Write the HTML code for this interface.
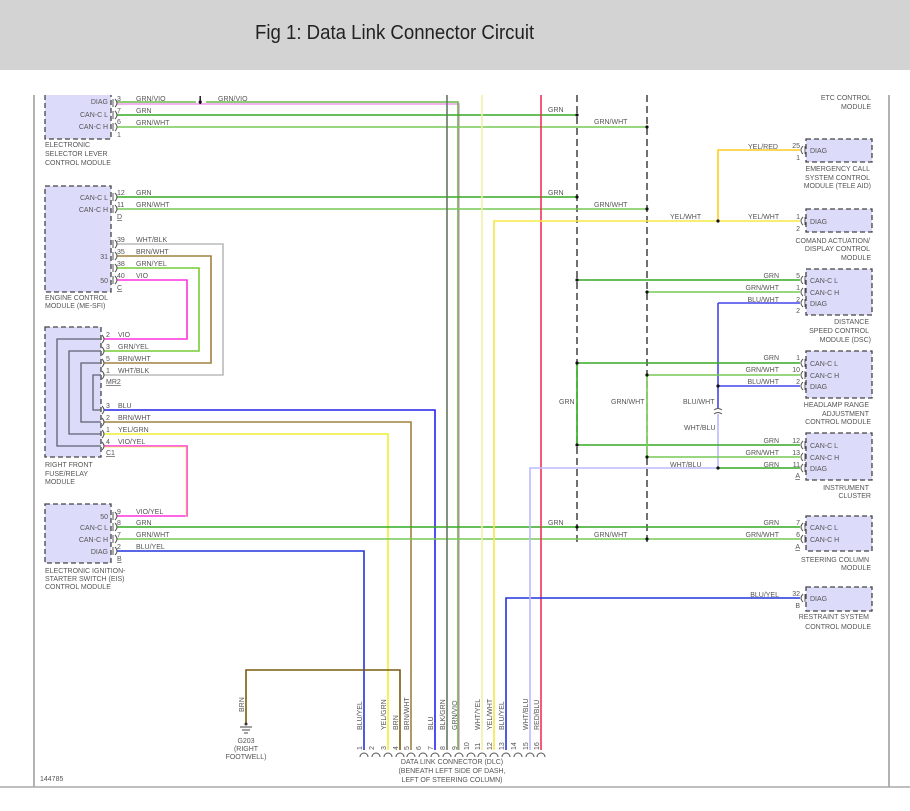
<!DOCTYPE html>
<html><head><meta charset="utf-8"><style>
html,body{margin:0;padding:0;background:#fff;width:910px;height:811px;overflow:hidden}
.hdr{position:absolute;left:0;top:0;width:910px;height:70px;background:#d3d3d3}
.hdr span{position:absolute;left:255px;top:22px;font-family:"Liberation Sans",sans-serif;font-size:20px;color:#222;transform:scaleX(0.93);transform-origin:left top;white-space:nowrap}
svg{position:absolute;left:0;top:0}
text{font-family:"Liberation Sans",sans-serif;font-size:7px;fill:#555}
.bx{fill:#dcdcfa;stroke:#444;stroke-width:1.3;stroke-dasharray:5,3}
.pn{fill:none;stroke:#555;stroke-width:1}
</style></head><body>
<div class="hdr"><span>Fig 1: Data Link Connector Circuit</span></div>
<svg width="910" height="811" viewBox="0 0 910 811">
<line x1="34" y1="95" x2="34" y2="787" stroke="#999" stroke-width="1.5"/>
<line x1="889" y1="95" x2="889" y2="787" stroke="#999" stroke-width="1.5"/>
<line x1="0" y1="787" x2="910" y2="787" stroke="#aaa" stroke-width="1.5"/>
<text x="40" y="781">144785</text>

<rect x="45" y="95" width="66" height="44" fill="#dcdcfa"/>
<path class="bx" d="M45,95V139H111V95" />
<rect class="bx" x="45" y="186" width="66" height="106"/>
<rect class="bx" x="45" y="327" width="56" height="130"/>
<rect class="bx" x="45" y="504" width="66" height="59"/>
<rect class="bx" x="806" y="139" width="66" height="23"/>
<rect class="bx" x="806" y="209" width="66" height="23"/>
<rect class="bx" x="806" y="269" width="66" height="46"/>
<rect class="bx" x="806" y="351" width="66" height="47"/>
<rect class="bx" x="806" y="433" width="66" height="47"/>
<rect class="bx" x="806" y="516" width="66" height="35"/>
<rect class="bx" x="806" y="587" width="66" height="24"/>

<g fill="none" stroke="#606070" stroke-width="1.3">
<path d="M101,339H57V446H101"/><path d="M101,351H69V434H101"/><path d="M101,363H81V422H101"/><path d="M101,375H93V410H101"/>
</g>

<line x1="577" y1="95" x2="577" y2="545" stroke="#111" stroke-width="1.2" stroke-dasharray="7,4"/>
<line x1="647" y1="95" x2="647" y2="545" stroke="#111" stroke-width="1.2" stroke-dasharray="7,4"/>

<g fill="none" stroke-width="1.6">
<path d="M117,104H459V750" stroke="#ee99ee"/>
<path d="M117,102H196M206,102H458V750" stroke="#66bb44"/>
<path d="M117,115H577" stroke="#33aa22"/>
<path d="M117,127H647" stroke="#77c855"/>
<path d="M117,197H577" stroke="#33aa22"/>
<path d="M117,209H647" stroke="#77c855"/>
<path d="M117,244H223V375H104" stroke="#bbbbbb"/>
<path d="M117,256H211V363H104" stroke="#a08040"/>
<path d="M117,268H199V351H104" stroke="#77cc33"/>
<path d="M117,280H187V339H104" stroke="#ff33dd"/>
<path d="M104,410H435V750" stroke="#2222ee"/>
<path d="M104,422H411V750" stroke="#a08040"/>
<path d="M104,434H388V750" stroke="#eeee33"/>
<path d="M104,446H187V516H117" stroke="#ff33dd"/>
<path d="M104,447H186V517" stroke="#eeee55" stroke-width="0.8"/>
<path d="M117,527H800" stroke="#33aa22"/>
<path d="M117,539H800" stroke="#77c855"/>
<path d="M117,551H364V750" stroke="#2233dd"/>
<path d="M447,95V750" stroke="#667766"/>
<path d="M482,95V750" stroke="#eeeeaa"/>
<path d="M541,95V750" stroke="#ee3355"/>
<path d="M494,750V221H800" stroke="#f5e844"/>
<path d="M718,221V150H800" stroke="#ffcc22"/>
<path d="M400,750V670H246V723" stroke="#7a5a10"/>
<path d="M506,750V598H800" stroke="#2233dd"/>
<path d="M530,750V468H718" stroke="#bbbbff"/>
<path d="M718,303H800M718,303V386H800M718,386V408" stroke="#4444ee"/>
<path d="M718,414V468" stroke="#bbbbff"/>
<path d="M577,280H800M577,363H800M577,363V445H800" stroke="#33aa22"/>
<path d="M647,292H800M647,375H800M647,375V457H800" stroke="#77c855"/>
<path d="M718,468H800" stroke="#33aa22"/>
</g>
<g fill="#111">
<circle cx="577" cy="115" r="1.6"/><circle cx="647" cy="127" r="1.6"/><circle cx="577" cy="197" r="1.6"/><circle cx="647" cy="209" r="1.6"/>
<circle cx="718" cy="221" r="1.6"/><circle cx="577" cy="280" r="1.6"/><circle cx="647" cy="292" r="1.6"/><circle cx="577" cy="363" r="1.6"/>
<circle cx="647" cy="375" r="1.6"/><circle cx="718" cy="386" r="1.6"/><circle cx="577" cy="445" r="1.6"/><circle cx="647" cy="457" r="1.6"/>
<circle cx="718" cy="468" r="1.6"/><circle cx="577" cy="527" r="1.6"/><circle cx="647" cy="539" r="1.6"/>
<rect x="199.5" y="96" width="1.4" height="8"/><circle cx="200.2" cy="102" r="1.6"/>
</g>
<path d="M714,410q4,-3 8,0M714,414q4,-3 8,0" fill="none" stroke="#555"/>

<g class="pn">
<path d="M113,99v8M115,99q4,4 0,8M113,111v8M115,111q4,4 0,8M113,123v8M115,123q4,4 0,8"/>
<path d="M113,193v8M115,193q4,4 0,8M113,205v8M115,205q4,4 0,8M113,240v8M115,240q4,4 0,8M113,252v8M115,252q4,4 0,8M113,264v8M115,264q4,4 0,8M113,276v8M115,276q4,4 0,8"/>
<path d="M102,335q4,4 0,8M102,347q4,4 0,8M102,359q4,4 0,8M102,371q4,4 0,8M102,406q4,4 0,8M102,418q4,4 0,8M102,430q4,4 0,8M102,442q4,4 0,8"/>
<path d="M113,512v8M115,512q4,4 0,8M113,523v8M115,523q4,4 0,8M113,535v8M115,535q4,4 0,8M113,547v8M115,547q4,4 0,8"/>
<path d="M803,146q-4,4 0,8M805,146v8M803,217q-4,4 0,8M805,217v8M803,276q-4,4 0,8M805,276v8M803,288q-4,4 0,8M805,288v8M803,299q-4,4 0,8M805,299v8"/>
<path d="M803,359q-4,4 0,8M805,359v8M803,371q-4,4 0,8M805,371v8M803,382q-4,4 0,8M805,382v8M803,441q-4,4 0,8M805,441v8M803,453q-4,4 0,8M805,453v8M803,464q-4,4 0,8M805,464v8"/>
<path d="M803,523q-4,4 0,8M805,523v8M803,535q-4,4 0,8M805,535v8M803,594q-4,4 0,8M805,594v8"/>
</g>
<g fill="none" stroke="#555">
<path d="M360,757a4,4 0 0 1 8,0M372,757a4,4 0 0 1 8,0M384,757a4,4 0 0 1 8,0M396,757a4,4 0 0 1 8,0M407,757a4,4 0 0 1 8,0M419,757a4,4 0 0 1 8,0M431,757a4,4 0 0 1 8,0M443,757a4,4 0 0 1 8,0M455,757a4,4 0 0 1 8,0M467,757a4,4 0 0 1 8,0M478,757a4,4 0 0 1 8,0M490,757a4,4 0 0 1 8,0M502,757a4,4 0 0 1 8,0M514,757a4,4 0 0 1 8,0M526,757a4,4 0 0 1 8,0M537,757a4,4 0 0 1 8,0"/>
<path d="M240,727h12M242,730h8M244,733h4" stroke="#444"/>
</g>
<circle cx="246" cy="724" r="1.5" fill="#333"/>

<g text-anchor="end">
<text x="108" y="104">DIAG</text><text x="108" y="117">CAN-C L</text><text x="108" y="129">CAN-C H</text>
<text x="108" y="200">CAN-C L</text><text x="108" y="212">CAN-C H</text><text x="108" y="259">31</text><text x="108" y="283">50</text>
<text x="108" y="519">50</text><text x="108" y="530">CAN-C L</text><text x="108" y="542">CAN-C H</text><text x="108" y="554">DIAG</text>
</g>
<text x="45" y="147">ELECTRONIC</text><text x="45" y="156">SELECTOR LEVER</text><text x="45" y="165">CONTROL MODULE</text>
<text x="45" y="300">ENGINE CONTROL</text><text x="45" y="308">MODULE (ME-SFI)</text>
<text x="45" y="467">RIGHT FRONT</text><text x="45" y="476">FUSE/RELAY</text><text x="45" y="484">MODULE</text>
<text x="45" y="573">ELECTRONIC IGNITION-</text><text x="45" y="581">STARTER SWITCH (EIS)</text><text x="45" y="589">CONTROL MODULE</text>
<text x="117" y="101">3</text><text x="117" y="113">7</text><text x="117" y="124">6</text><text x="117" y="137">1</text>
<text x="117" y="195">12</text><text x="117" y="207">11</text><text x="117" y="219" text-decoration="underline">D</text>
<text x="117" y="242">39</text><text x="117" y="254">35</text><text x="117" y="266">38</text><text x="117" y="278">40</text><text x="117" y="290" text-decoration="underline">C</text>
<text x="106" y="337">2</text><text x="106" y="349">3</text><text x="106" y="361">5</text><text x="106" y="373">1</text><text x="106" y="384" text-decoration="underline">MR2</text>
<text x="106" y="408">3</text><text x="106" y="420">2</text><text x="106" y="432">1</text><text x="106" y="444">4</text><text x="106" y="455" text-decoration="underline">C1</text>
<text x="117" y="514">9</text><text x="117" y="525">8</text><text x="117" y="537">7</text><text x="117" y="549">2</text><text x="117" y="561" text-decoration="underline">B</text>
<text x="136" y="101">GRN/VIO</text><text x="218" y="101">GRN/VIO</text><text x="136" y="113">GRN</text><text x="136" y="125">GRN/WHT</text>
<text x="136" y="195">GRN</text><text x="136" y="207">GRN/WHT</text>
<text x="136" y="242">WHT/BLK</text><text x="136" y="254">BRN/WHT</text><text x="136" y="266">GRN/YEL</text><text x="136" y="278">VIO</text>
<text x="118" y="337">VIO</text><text x="118" y="349">GRN/YEL</text><text x="118" y="361">BRN/WHT</text><text x="118" y="373">WHT/BLK</text>
<text x="118" y="408">BLU</text><text x="118" y="420">BRN/WHT</text><text x="118" y="432">YEL/GRN</text><text x="118" y="444">VIO/YEL</text>
<text x="136" y="514">VIO/YEL</text><text x="136" y="525">GRN</text><text x="136" y="537">GRN/WHT</text><text x="136" y="549">BLU/YEL</text>
<text x="548" y="112">GRN</text><text x="594" y="124">GRN/WHT</text><text x="548" y="195">GRN</text><text x="594" y="207">GRN/WHT</text>
<text x="670" y="219">YEL/WHT</text><text x="748" y="219">YEL/WHT</text><text x="748" y="149">YEL/RED</text>
<text x="559" y="404">GRN</text><text x="611" y="404">GRN/WHT</text><text x="683" y="404">BLU/WHT</text><text x="684" y="430">WHT/BLU</text>
<text x="670" y="467">WHT/BLU</text><text x="548" y="525">GRN</text><text x="594" y="537">GRN/WHT</text>
<g text-anchor="end">
<text x="779" y="278">GRN</text><text x="779" y="290">GRN/WHT</text><text x="779" y="302">BLU/WHT</text>
<text x="779" y="360">GRN</text><text x="779" y="372">GRN/WHT</text><text x="779" y="384">BLU/WHT</text>
<text x="779" y="443">GRN</text><text x="779" y="455">GRN/WHT</text><text x="779" y="467">GRN</text>
<text x="779" y="525">GRN</text><text x="779" y="537">GRN/WHT</text><text x="779" y="597">BLU/YEL</text>
<text x="800" y="148">25</text><text x="800" y="160">1</text><text x="800" y="219">1</text><text x="800" y="231">2</text>
<text x="800" y="278">5</text><text x="800" y="290">1</text><text x="800" y="302">2</text><text x="800" y="313">2</text>
<text x="800" y="360">1</text><text x="800" y="372">10</text><text x="800" y="384">2</text>
<text x="800" y="443">12</text><text x="800" y="455">13</text><text x="800" y="467">11</text><text x="800" y="478" text-decoration="underline">A</text>
<text x="800" y="525">7</text><text x="800" y="537">6</text><text x="800" y="549" text-decoration="underline">A</text>
<text x="800" y="596">32</text><text x="800" y="608">B</text>
<text x="871" y="100">ETC CONTROL</text><text x="871" y="109">MODULE</text>
<text x="870" y="171">EMERGENCY CALL</text><text x="870" y="180">SYSTEM CONTROL</text><text x="871" y="188">MODULE (TELE AID)</text>
<text x="870" y="243">COMAND ACTUATION/</text><text x="870" y="251">DISPLAY CONTROL</text><text x="871" y="260">MODULE</text>
<text x="869" y="324">DISTANCE</text><text x="869" y="333">SPEED CONTROL</text><text x="871" y="342">MODULE (DSC)</text>
<text x="869" y="407">HEADLAMP RANGE</text><text x="869" y="416">ADJUSTMENT</text><text x="871" y="424">CONTROL MODULE</text>
<text x="869" y="490">INSTRUMENT</text><text x="871" y="498">CLUSTER</text>
<text x="869" y="562">STEERING COLUMN</text><text x="871" y="570">MODULE</text>
<text x="869" y="619">RESTRAINT SYSTEM</text><text x="871" y="629">CONTROL MODULE</text>
</g>
<text x="810" y="153">DIAG</text><text x="810" y="224">DIAG</text>
<text x="810" y="283">CAN-C L</text><text x="810" y="295">CAN-C H</text><text x="810" y="306">DIAG</text>
<text x="810" y="366">CAN-C L</text><text x="810" y="378">CAN-C H</text><text x="810" y="389">DIAG</text>
<text x="810" y="448">CAN-C L</text><text x="810" y="460">CAN-C H</text><text x="810" y="471">DIAG</text>
<text x="810" y="530">CAN-C L</text><text x="810" y="542">CAN-C H</text><text x="810" y="601">DIAG</text>
<g>
<text transform="translate(362,730) rotate(-90)">BLU/YEL</text>
<text transform="translate(386,730) rotate(-90)">YEL/GRN</text>
<text transform="translate(398,730) rotate(-90)">BRN</text>
<text transform="translate(409,730) rotate(-90)">BRN/WHT</text>
<text transform="translate(433,730) rotate(-90)">BLU</text>
<text transform="translate(445,730) rotate(-90)">BLK/GRN</text>
<text transform="translate(457,730) rotate(-90)">GRN/VIO</text>
<text transform="translate(480,730) rotate(-90)">WHT/YEL</text>
<text transform="translate(492,730) rotate(-90)">YEL/WHT</text>
<text transform="translate(504,730) rotate(-90)">BLU/YEL</text>
<text transform="translate(528,730) rotate(-90)">WHT/BLU</text>
<text transform="translate(539,730) rotate(-90)">RED/BLU</text>
<text transform="translate(244,712) rotate(-90)">BRN</text>
<text transform="translate(362,750) rotate(-90)">1</text><text transform="translate(374,750) rotate(-90)">2</text>
<text transform="translate(386,750) rotate(-90)">3</text><text transform="translate(398,750) rotate(-90)">4</text>
<text transform="translate(409,750) rotate(-90)">5</text><text transform="translate(421,750) rotate(-90)">6</text>
<text transform="translate(433,750) rotate(-90)">7</text><text transform="translate(445,750) rotate(-90)">8</text>
<text transform="translate(457,750) rotate(-90)">9</text><text transform="translate(469,750) rotate(-90)">10</text>
<text transform="translate(480,750) rotate(-90)">11</text><text transform="translate(492,750) rotate(-90)">12</text>
<text transform="translate(504,750) rotate(-90)">13</text><text transform="translate(516,750) rotate(-90)">14</text>
<text transform="translate(528,750) rotate(-90)">15</text><text transform="translate(539,750) rotate(-90)">16</text>
</g>
<g text-anchor="middle">
<text x="246" y="743">G203</text><text x="246" y="751">(RIGHT</text><text x="246" y="759">FOOTWELL)</text>
<text x="452" y="764">DATA LINK CONNECTOR (DLC)</text><text x="452" y="773">(BENEATH LEFT SIDE OF DASH,</text><text x="452" y="782">LEFT OF STEERING COLUMN)</text>
</g>
</svg>
</body></html>
